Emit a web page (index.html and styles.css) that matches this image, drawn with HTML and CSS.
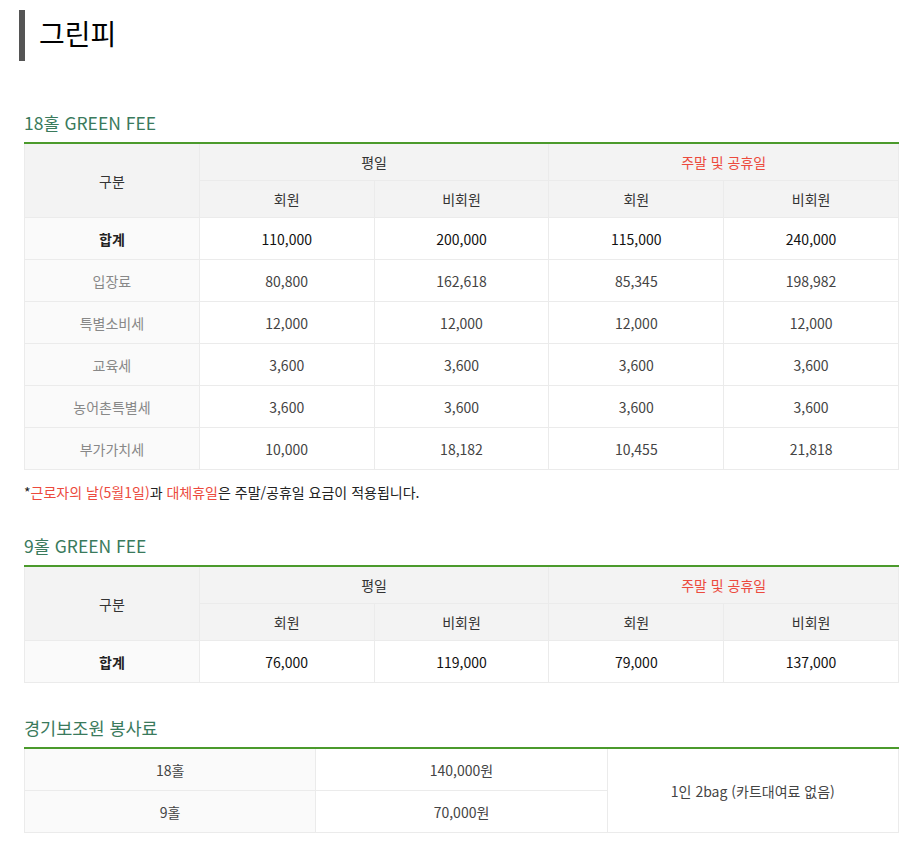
FILE: index.html
```html
<!DOCTYPE html>
<html lang="ko">
<head>
<meta charset="utf-8">
<link rel="stylesheet" href="styles.css">
</head>
<body>
<div class="page">
  <h1 class="title">그린피</h1>

  <h2 class="sec">18홀 GREEN FEE</h2>
  <table class="fee">
    <colgroup><col><col><col><col><col></colgroup>
    <thead>
      <tr><th rowspan="2">구분</th><th colspan="2">평일</th><th colspan="2" class="red">주말 및 공휴일</th></tr>
      <tr><th>회원</th><th>비회원</th><th>회원</th><th>비회원</th></tr>
    </thead>
    <tbody>
      <tr class="total"><th>합계</th><td>110,000</td><td>200,000</td><td>115,000</td><td>240,000</td></tr>
      <tr><th>입장료</th><td>80,800</td><td>162,618</td><td>85,345</td><td>198,982</td></tr>
      <tr><th>특별소비세</th><td>12,000</td><td>12,000</td><td>12,000</td><td>12,000</td></tr>
      <tr><th>교육세</th><td>3,600</td><td>3,600</td><td>3,600</td><td>3,600</td></tr>
      <tr><th>농어촌특별세</th><td>3,600</td><td>3,600</td><td>3,600</td><td>3,600</td></tr>
      <tr><th>부가가치세</th><td>10,000</td><td>18,182</td><td>10,455</td><td>21,818</td></tr>
    </tbody>
  </table>
  <p class="note">*<span class="red">근로자의 날(5월1일)</span>과 <span class="red">대체휴일</span>은 주말/공휴일 요금이 적용됩니다.</p>

  <h2 class="sec sec2">9홀 GREEN FEE</h2>
  <table class="fee">
    <colgroup><col><col><col><col><col></colgroup>
    <thead>
      <tr><th rowspan="2">구분</th><th colspan="2">평일</th><th colspan="2" class="red">주말 및 공휴일</th></tr>
      <tr><th>회원</th><th>비회원</th><th>회원</th><th>비회원</th></tr>
    </thead>
    <tbody>
      <tr class="total"><th>합계</th><td>76,000</td><td>119,000</td><td>79,000</td><td>137,000</td></tr>
    </tbody>
  </table>

  <h2 class="sec sec3">경기보조원 봉사료</h2>
  <table class="fee caddie">
    <colgroup><col><col><col></colgroup>
    <tbody>
      <tr><th>18홀</th><td>140,000원</td><td rowspan="2">1인 2bag (카트대여료 없음)</td></tr>
      <tr><th>9홀</th><td>70,000원</td></tr>
    </tbody>
  </table>
</div>
</body>
</html>
```

FILE: styles.css
```css
html, body {
  margin: 0;
  padding: 0;
  background: #fff;
}
body {
  font-family: "Noto Sans CJK KR", "Noto Sans", sans-serif;
  color: #333;
}
.page {
  padding: 10px 22px 0 24px;
}
.title {
  margin: 0 0 0 -5px;
  border-left: 6px solid #555;
  padding-left: 14px;
  height: 51px;
  font-size: 28px;
  line-height: 46px;
  font-weight: 400;
  color: #000;
}
.sec {
  margin: 50px 0 7px;
  font-size: 17.5px;
  line-height: 24px;
  font-weight: 400;
  color: #3a7a5c;
}
.sec2 { margin-top: 32px; }
.sec3 { margin-top: 33px; }
.fee {
  width: 100%;
  border-collapse: collapse;
  table-layout: fixed;
  border-top: 2px solid #4b9a2c;
  font-size: 14px;
}
.fee th, .fee td {
  border: 1px solid #ebebeb;
  text-align: center;
  padding: 0;
  font-weight: 400;
}
.fee thead th {
  background: #f3f3f3;
  height: 36px;
  color: #333;
}
.fee tbody th {
  background: #fafafa;
  color: #888;
}
.fee tbody td {
  height: 41px;
  color: #444;
}
.fee tbody tr.total th {
  color: #222;
  font-weight: 700;
}
.fee tbody tr.total td {
  color: #111;
}
.fee thead th.red, .red {
  color: #ec4a3d;
}
.note {
  margin: 12px 0 0;
  font-size: 14px;
  line-height: 20px;
  color: #222;
}
.caddie tbody th {
  color: #444;
}
.caddie tbody td {
  height: 41px;
}
```
